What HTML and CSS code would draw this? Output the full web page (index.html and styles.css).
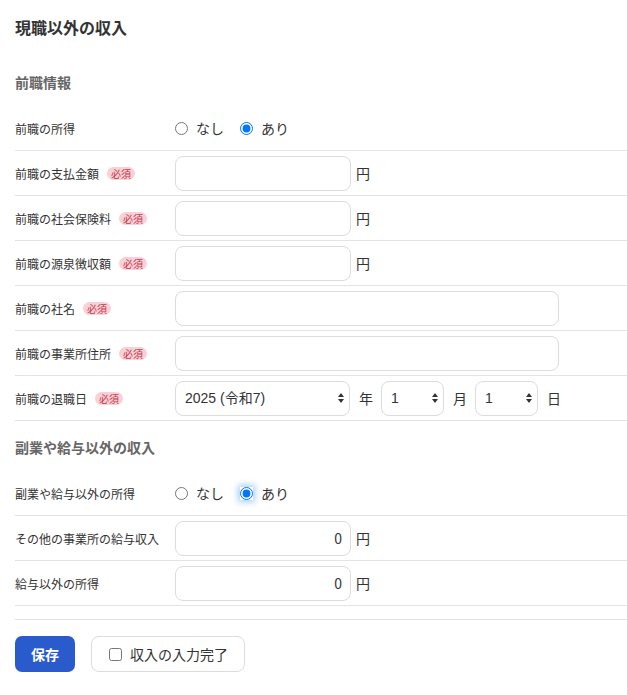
FILE: index.html
```html
<!DOCTYPE html>
<html lang="ja">
<head>
<meta charset="utf-8">
<title>現職以外の収入</title>
<link rel="stylesheet" href="styles.css">
</head>
<body>
<div class="page">
  <h1 class="title">現職以外の収入</h1>

  <h2 class="section-title">前職情報</h2>
  <div class="row">
    <div class="label">前職の所得</div>
    <div class="field">
      <label class="radio"><input type="radio" name="prev"> なし</label>
      <label class="radio"><input type="radio" name="prev" checked> あり</label>
    </div>
  </div>
  <div class="row">
    <div class="label">前職の支払金額<span class="badge">必須</span></div>
    <div class="field"><input class="input" type="text"><span class="unit">円</span></div>
  </div>
  <div class="row">
    <div class="label">前職の社会保険料<span class="badge">必須</span></div>
    <div class="field"><input class="input" type="text"><span class="unit">円</span></div>
  </div>
  <div class="row">
    <div class="label">前職の源泉徴収額<span class="badge">必須</span></div>
    <div class="field"><input class="input" type="text"><span class="unit">円</span></div>
  </div>
  <div class="row">
    <div class="label">前職の社名<span class="badge">必須</span></div>
    <div class="field"><input class="input input-wide" type="text"></div>
  </div>
  <div class="row">
    <div class="label">前職の事業所住所<span class="badge">必須</span></div>
    <div class="field"><input class="input input-wide" type="text"></div>
  </div>
  <div class="row">
    <div class="label">前職の退職日<span class="badge">必須</span></div>
    <div class="field date">
      <select class="select select-year"><option>2025 (令和7)</option></select>
      <span class="date-unit">年</span>
      <select class="select select-small"><option>1</option></select>
      <span class="date-unit">月</span>
      <select class="select select-small"><option>1</option></select>
      <span class="date-unit">日</span>
    </div>
  </div>

  <h2 class="section-title">副業や給与以外の収入</h2>
  <div class="row">
    <div class="label">副業や給与以外の所得</div>
    <div class="field">
      <label class="radio"><input type="radio" name="side"> なし</label>
      <label class="radio"><input class="focused" type="radio" name="side" checked> あり</label>
    </div>
  </div>
  <div class="row">
    <div class="label">その他の事業所の給与収入</div>
    <div class="field"><input class="input num" type="text" value="0"><span class="unit">円</span></div>
  </div>
  <div class="row">
    <div class="label">給与以外の所得</div>
    <div class="field"><input class="input num" type="text" value="0"><span class="unit">円</span></div>
  </div>

  <div class="footer">
    <button class="btn-primary" type="button">保存</button>
    <label class="btn-check"><input type="checkbox"> 収入の入力完了</label>
  </div>
</div>
</body>
</html>
```

FILE: styles.css
```css
* { box-sizing: border-box; }
html, body { margin: 0; padding: 0; background: #fff; }
body {
  font-family: "Noto Sans CJK JP", "Noto Sans", sans-serif;
  color: #333;
}
.page { padding: 15px 0 0 15px; }
.title {
  margin: 0;
  font-size: 16px;
  line-height: 24px;
  font-weight: 700;
  color: #333;
}
.section-title {
  margin: 33px 0 14px;
  font-size: 14px;
  line-height: 20px;
  font-weight: 700;
  color: #666;
}
.row + .section-title { margin-top: 16px; }
.row {
  display: flex;
  align-items: center;
  height: 45px;
  border-bottom: 1px solid #e3e3e3;
}
.label {
  width: 160px;
  flex: none;
  font-size: 12px;
  display: flex;
  align-items: center;
}
.badge {
  margin-left: 8px;
  background: #f9d0d7;
  color: #c23a4a;
  font-size: 10px;
  line-height: 13px;
  padding: 0 4px;
  border-radius: 7px;
}
.field {
  display: flex;
  align-items: center;
  font-size: 14px;
}
.radio {
  display: flex;
  align-items: center;
  margin-right: 16px;
  font-size: 14px;
}
.radio input {
  margin: 0 8px 0 0;
  width: 13px;
  height: 13px;
}
.radio input.focused {
  border-radius: 50%;
  box-shadow: 0 0 6px 2px rgba(30, 130, 255, 0.4);
}
.input {
  width: 176px;
  height: 35px;
  border: 1px solid #dcdcdc;
  border-radius: 8px;
  padding: 0 8px;
  font: inherit;
  font-size: 14px;
  color: #333;
  background: #fff;
}
.input-wide { width: 384px; }
.num { text-align: right; }
.unit { margin-left: 5px; }
.select {
  appearance: none;
  -webkit-appearance: none;
  height: 35px;
  border: 1px solid #dcdcdc;
  border-radius: 8px;
  padding: 0 18px 0 9px;
  font-family: "Liberation Sans", "Noto Sans CJK JP", sans-serif;
  font-size: 14px;
  color: #333;
  background: #fff url("data:image/svg+xml;utf8,<svg xmlns='http://www.w3.org/2000/svg' width='6' height='10'><path d='M0 4 L3 0 L6 4 Z M0 6 L3 10 L6 6 Z' fill='%23333'/></svg>") no-repeat right 5px center;
}
.select-year { width: 175px; }
.select-small { width: 63px; }
.date-unit { margin: 0 8px 0 9px; }
.date-unit:last-child { margin-right: 0; }
.footer {
  margin-top: 13px;
  border-top: 1px solid #e3e3e3;
  padding-top: 16px;
  display: flex;
  gap: 16px;
}
.btn-primary {
  width: 60px;
  height: 36px;
  border: none;
  border-radius: 7px;
  background: #2a5bcc;
  color: #fff;
  font: inherit;
  font-size: 14px;
  font-weight: 700;
}
.btn-check {
  display: flex;
  align-items: center;
  height: 36px;
  padding: 0 16px 0 17px;
  border: 1px solid #dcdcdc;
  border-radius: 8px;
  font-size: 14px;
}
.btn-check input {
  margin: 0 8px 0 0;
  width: 13px;
  height: 13px;
}
```
